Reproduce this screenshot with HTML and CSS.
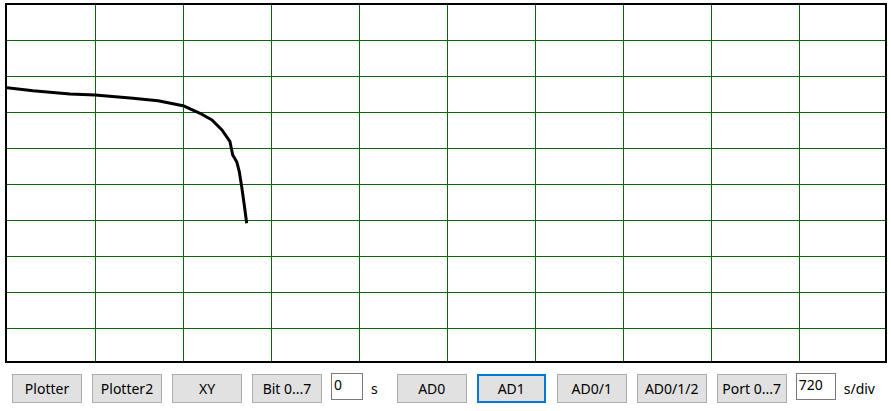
FILE: index.html
```html
<!DOCTYPE html>
<html lang="en">
<head>
<meta charset="UTF-8">
<meta name="viewport" content="width=device-width, initial-scale=1.0">
<link rel="stylesheet" href="styles.css">
<title>Plotter</title>
</head>
<body>
<div id="scope">
  <svg width="878" height="356" viewBox="0 0 878 356">
    <g class="grid">
      <line x1="88.5" y1="0" x2="88.5" y2="356"/>
      <line x1="176.5" y1="0" x2="176.5" y2="356"/>
      <line x1="264.5" y1="0" x2="264.5" y2="356"/>
      <line x1="352.5" y1="0" x2="352.5" y2="356"/>
      <line x1="440.5" y1="0" x2="440.5" y2="356"/>
      <line x1="528.5" y1="0" x2="528.5" y2="356"/>
      <line x1="616.5" y1="0" x2="616.5" y2="356"/>
      <line x1="704.5" y1="0" x2="704.5" y2="356"/>
      <line x1="792.5" y1="0" x2="792.5" y2="356"/>
      <line x1="0" y1="35.5" x2="878" y2="35.5"/>
      <line x1="0" y1="71.5" x2="878" y2="71.5"/>
      <line x1="0" y1="107.5" x2="878" y2="107.5"/>
      <line x1="0" y1="143.5" x2="878" y2="143.5"/>
      <line x1="0" y1="179.5" x2="878" y2="179.5"/>
      <line x1="0" y1="215.5" x2="878" y2="215.5"/>
      <line x1="0" y1="251.5" x2="878" y2="251.5"/>
      <line x1="0" y1="287.5" x2="878" y2="287.5"/>
      <line x1="0" y1="323.5" x2="878" y2="323.5"/>
    </g>
    <!-- AD1 trace -->
    <polyline class="trace" points="0,82.7 26,85.7 63,89 88,90 126,93.3 151,95.7 176,100.7 193,108.3 205,115 215,125 223,136.7 225.7,150 229.7,156.7 232.3,166.7 234.7,181.7 237,198 239.7,218.3"/>
  </svg>
</div>

<div id="controls">
  <button class="btn">Plotter</button>
  <button class="btn">Plotter2</button>
  <button class="btn">XY</button>
  <button class="btn">Bit 0...7</button>
  <input class="box box-small" type="text" value="0">
  <span class="unit">s</span>
  <button class="btn btn-gap">AD0</button>
  <button class="btn active">AD1</button>
  <button class="btn">AD0/1</button>
  <button class="btn">AD0/1/2</button>
  <button class="btn">Port 0...7</button>
  <input class="box" type="text" value="720">
  <span class="unit">s/div</span>
</div>
</body>
</html>
```

FILE: styles.css
```css
body {
  margin: 0;
  background-color: white;
  font-family: "Noto Sans", "Open Sans", sans-serif;
  font-size: 14px;
  color: black;
}
#scope {
  width: 878px;
  height: 356px;
  margin: 3px 0 0 5px;
  border: 2px solid black;
  background-color: white;
}
#scope svg {
  display: block;
}
.grid line {
  stroke: #0b650b;
  stroke-width: 1;
  shape-rendering: crispEdges;
}
.trace {
  fill: none;
  stroke: black;
  stroke-width: 3;
  stroke-linejoin: round;
}
#controls {
  display: flex;
  align-items: flex-start;
  margin-top: 10px;
  padding-left: 12px;
}
.btn {
  box-sizing: border-box;
  width: 70px;
  height: 29px;
  margin-top: 1px;
  margin-right: 10px;
  padding: 0;
  background-color: #e1e1e1;
  border: 1px solid #adadad;
  font-family: inherit;
  font-size: 14px;
  color: black;
  line-height: 26px;
}
.btn-gap {
  margin-left: 19px;
}
.btn.active {
  width: 69px;
  margin-right: 11px;
  border: 2px solid #0078d7;
}
.box {
  box-sizing: border-box;
  width: 40px;
  height: 27px;
  margin-left: -1px;
  padding: 0 2px 4px;
  border: 1px solid #7a7a7a;
  font-family: inherit;
  font-size: 14px;
  color: black;
  outline: none;
}
.box-small {
  width: 32px;
}
.unit {
  margin-left: 8px;
  line-height: 31px;
}
```
